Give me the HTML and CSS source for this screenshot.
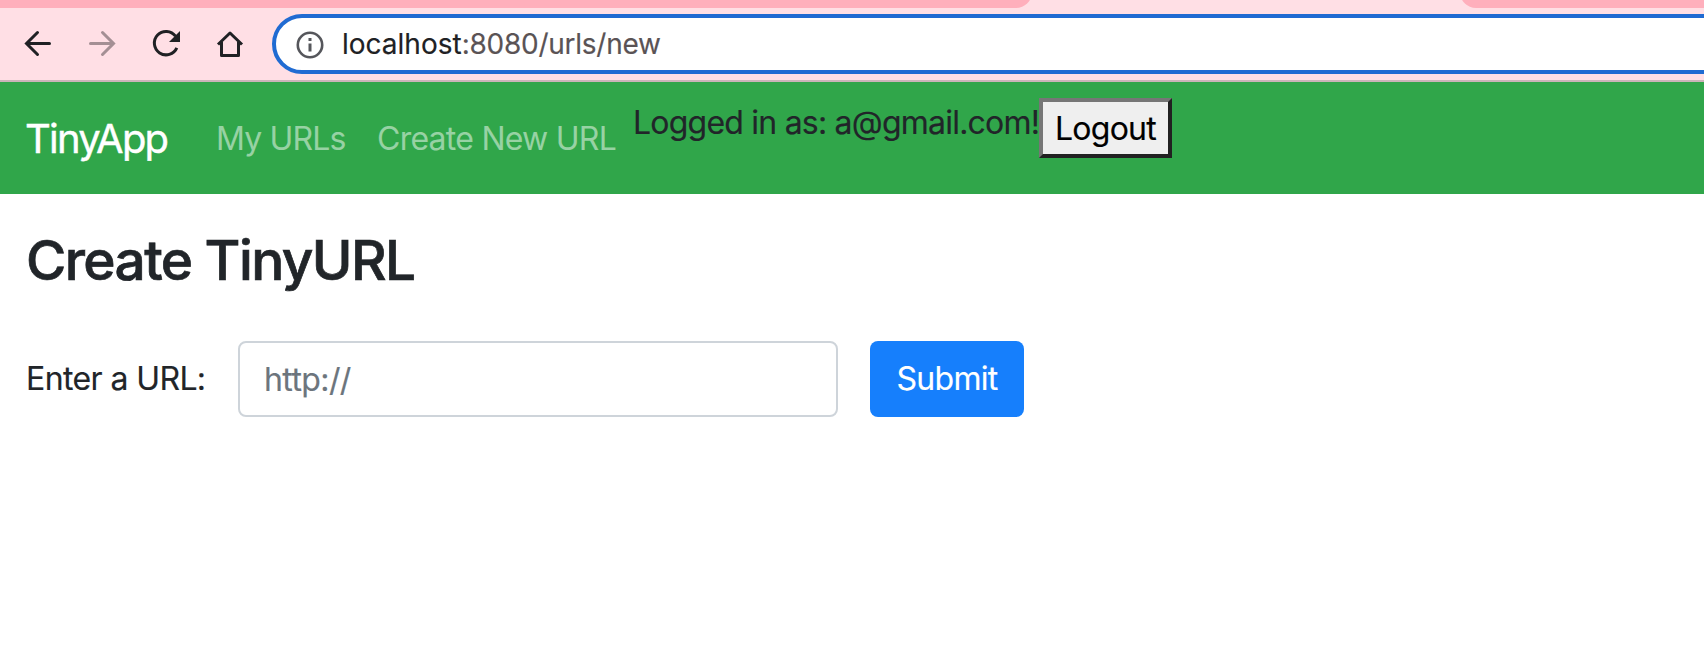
FILE: index.html
```html
<!DOCTYPE html>
<html lang="en">
<head>
<meta charset="utf-8">
<title>TinyApp</title>
<link rel="stylesheet" href="styles.css">
</head>
<body>
<header class="browser">
  <div class="tabs"><div class="tab tab-left"></div><div class="tab tab-right"></div></div>
  <div class="toolbar">
    <svg class="controls" width="272" height="60" viewBox="0 14 272 60" fill="none" stroke="#202124" stroke-width="3">
      <path d="M49.500 43.500H27M37.500 32.500l-11 11 11 11" stroke-linecap="round"/>
      <path d="M90.500 43.500H113M102.500 32.500l11 11-11 11" stroke="#a48f94" stroke-linecap="round"/>
      <path d="M175.500 36.200A11.700 11.700 0 1 0 176.800 47.800"/>
      <path d="M180 31v11h-11z" fill="#202124" stroke="none"/>
      <path d="M218 44.500l12-11.500 12 11.500M221.500 42v13.500h17V42" stroke-linejoin="round"/>
    </svg>
    <div class="omnibox">
      <svg class="info" width="28" height="28" viewBox="0 0 28 28" fill="none" stroke="#55565b" stroke-width="2.600"><circle cx="14" cy="14" r="12.200"/><path d="M14 12.500v8M14 7v3" stroke-width="3"/></svg>
      <span class="address">localhost<span class="path">:8080/urls/new</span></span>
    </div>
  </div>
</header>
<nav class="navbar">
  <a class="brand">TinyApp</a>
  <a class="link link-list">My URLs</a>
  <a class="link link-new">Create New URL</a>
  <form class="session"><span class="user">Logged in as: a@gmail.com!</span><button type="button" class="logout"><span>Logout</span></button></form>
</nav>
<main class="content">
  <h3 class="title"><span>Create TinyURL</span></h3>
  <form class="form">
    <label class="label" for="url">Enter a URL:</label>
    <input class="field" id="url" type="text" placeholder="http://">
    <button class="submit" type="button"><span>Submit</span></button>
  </form>
</main>
</body>
</html>
```
FILE: styles.css
```css
* { box-sizing: border-box; }
body { margin: 0; background: #fff; color: #212529; font: 32px/48px Inter, "Liberation Sans", sans-serif; -webkit-text-stroke: .15px; overflow: hidden; }
.browser { height: 82px; background: #ffdfe5; border-bottom: 2px solid #cbb4b9; }
.tabs { height: 8px; display: flex; justify-content: space-between; overflow: hidden; align-items: flex-end; }
.tab { height: 20px; background: #ffafbc; flex: none; }
.tab-left { width: 1032px; border-bottom-right-radius: 16px; }
.tab-right { width: 244px; border-bottom-left-radius: 16px; }
.toolbar { display: flex; padding-top: 6px; height: 72px; overflow: hidden; }
.controls { flex: none; }
.omnibox { flex: 1; height: 60px; margin-right: -40px; background: #fff; border: 4px solid #206bd2; border-radius: 30px; padding-left: 21px; display: flex; align-items: center; }
.info { flex: none; margin-top: 1px; margin-left: -1px; }
.address { font-size: 28px; line-height: 40px; margin-left: 18px; color: #202124; white-space: nowrap; }
.path { color: #5a5355; letter-spacing: -0.25px; }
.navbar { height: 112px; background: #30a64a; padding: 16px 26px; display: flex; align-items: center; white-space: nowrap; }
.brand { color: #fff; font-size: 40px; line-height: 60px; letter-spacing: -1.8px; width: 175px; padding-top: 2px; margin-left: -1px; -webkit-text-stroke-width: .4px; }
.link { color: rgba(255,255,255,.5); padding: 2px 0 0 16px; -webkit-text-stroke-width: 0; }
.link-list { width: 161px; letter-spacing: -.85px; }
.link-new { width: 271px; letter-spacing: -.75px; }
.session { display: flex; align-items: flex-start; height: 80px; }
.user { width: 407px; letter-spacing: -.78px; padding: 1px 0 0 1px; }
.logout { height: 60px; width: 133px; padding: 2px 0 0; font: inherit; letter-spacing: -.75px; color: #000; background: #efefef; border: 4px solid; border-color: #767676 #212121 #212121 #767676; }
.content { padding: 32px 26px; }
.title { margin: 0; padding-top: 1px; font-size: 55px; line-height: 67px; font-weight: 500; letter-spacing: -1.6px; -webkit-text-stroke-width: .7px; }
.form { display: flex; align-items: center; margin-top: 47px; }
.label { flex: none; white-space: nowrap; width: 212px; letter-spacing: -.6px; }
.field { width: 600px; height: 76px; border: 2px solid #ced4da; border-radius: 8px; padding: 0 24px; font: inherit; letter-spacing: -.6px; }
.field::placeholder { color: #6c757d; opacity: 1; }
.submit { margin-left: 32px; width: 154px; height: 76px; padding: 0; border: 0; border-radius: 8px; background: #167ffc; color: #fff; font: inherit; letter-spacing: -.7px; }
```
